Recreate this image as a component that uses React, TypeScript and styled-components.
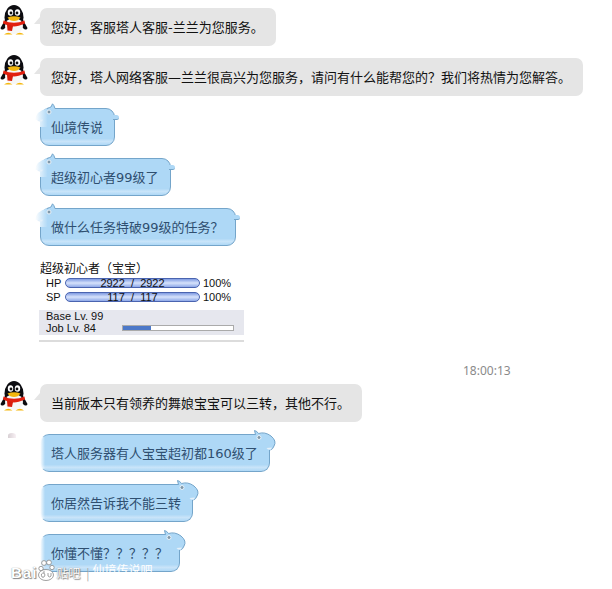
import * as React from 'react';
import { createGlobalStyle, styled } from 'styled-components';

const GlobalStyle = createGlobalStyle`
  html, body {
    margin: 0;
    padding: 0;
    background: #fff;
  }
`;

const agentLines = {
  hello: '您好，客服塔人客服-兰兰为您服务。',
  welcome: '您好，塔人网络客服—兰兰很高兴为您服务，请问有什么能帮您的？我们将热情为您解答。',
  answer: '当前版本只有领养的舞娘宝宝可以三转，其他不行。',
};

//Small QQ penguin used for the service agent
const Penguin = () => (
  <AvatarSvg viewBox="0 0 28 30">
    <ellipse cx="14" cy="12.5" rx="9.5" ry="12.5" fill="#0c0c10" />
    <path d="M5 15 L0.5 23 Q1 25.5 4 24 L8 20 Z" fill="#0c0c10" />
    <path d="M23 15 L27.5 23 Q27 25.5 24 24 L20 20 Z" fill="#0c0c10" />
    <ellipse cx="14" cy="21" rx="9" ry="8" fill="#f6f6f6" />
    <ellipse cx="10.5" cy="7.5" rx="2.7" ry="3.3" fill="#fff" />
    <ellipse cx="17.5" cy="7.5" rx="2.7" ry="3.3" fill="#fff" />
    <circle cx="11" cy="8" r="1.4" fill="#111" />
    <circle cx="17" cy="8" r="1.4" fill="#111" />
    <path d="M7.5 12.5 Q14 10 20.5 12.5 Q18 16 14 16 Q10 16 7.5 12.5 Z" fill="#f5b80e" />
    <path d="M3.5 15.5 Q14 20 24.5 15.5 L25 18.5 Q18 21.5 14 21.5 Q9 21.5 3 18.5 Z" fill="#e2200f" />
    <path d="M7 19.5 L13 21 L12 26 L7.5 25.5 Z" fill="#d81c0c" />
    <path d="M4 29.5 Q8 26 12.5 29.5 Z" fill="#f5b80e" />
    <path d="M15.5 29.5 Q20 26 24 29.5 Z" fill="#f5b80e" />
  </AvatarSvg>
);

//Top left skin of the blue bubble: ear, eye and a white fade
const LeftSkin = () => (
  <LeftSkinSvg viewBox="0 0 24 24">
    <defs>
      <linearGradient id="leftFade" x1="0" x2="1" y1="0" y2="0">
        <stop offset="0" stopColor="#ffffff" />
        <stop offset="0.55" stopColor="#aed8f6" />
      </linearGradient>
    </defs>
    <path d="M1 17 Q2 8 13 5.5 Q15.5 4.5 17 4 L18.5 0.8 Q20 2 21 5.5 L24 5.5 L24 24 L6 24 L6 17 Z" fill="url(#leftFade)" />
    <path d="M13 5.5 Q15.5 4.5 17 4 L18.5 0.8 Q20 2 21 5.5 L24 5.5" fill="none" stroke="#74a5ca" />
    <circle cx="15" cy="9" r="2" fill="#7f97a8" stroke="#e8f2fa" />
    <path d="M3 17 L9 16.5 L8 18.5 L5 18.5 Z" fill="#e4f0fa" />
  </LeftSkinSvg>
);

//Top right skin of the blue bubble: ear, eye and the round bump
const RightSkin = () => (
  <RightSkinSvg viewBox="0 0 26 24">
    <path d="M0 5.5 L4.5 5.5 L3.5 1.5 Q6 2 7.5 4.5 Q14 2.5 20 7 Q26 12 23 17 Q22 20 19.5 21 L0 21 Z" fill="#aed8f6" />
    <path d="M0 5.5 L4.5 5.5 L3.5 1.5 Q6 2 7.5 4.5 Q14 2.5 20 7 Q26 12 23 17 Q22 20 19.5 21" fill="none" stroke="#74a5ca" />
    <circle cx="8" cy="8.5" r="2" fill="#7f97a8" stroke="#e8f2fa" />
    <path d="M15.5 19 L21 18.5 L20 20.5 L17 20.5 Z" fill="#e4f0fa" />
  </RightSkinSvg>
);

const AgentMessage = ({ text }: { text: string }) => (
  <AgentRow>
    <Penguin />
    <GreyBubble>{text}</GreyBubble>
  </AgentRow>
);

const CustomerMessage = ({ text, side }: { text: string; side: 'left' | 'right' }) => (
  <BlueBubble side={side}>
    {side === 'left' ? <LeftSkin /> : <RightSkin />}
    <BubbleText>{text}</BubbleText>
    {side === 'left' && <SideTail />}
  </BlueBubble>
);

const StatusBar = ({ label, value }: { label: string; value: string }) => (
  <StatRow>
    <StatLabel>{label}</StatLabel>
    <Bar>{value}</Bar>
    <span>100%</span>
  </StatRow>
);

const App = () => (
  <Page>
    <GlobalStyle />
    <AgentMessage text={agentLines.hello} />
    <AgentMessage text={agentLines.welcome} />
    <CustomerMessage side="left" text="仙境传说" />
    <CustomerMessage side="left" text="超级初心者99级了" />
    <CustomerMessage side="left" text="做什么任务特破99级的任务？" />
    <StatusCard>
      <StatusTitle>超级初心者（宝宝）</StatusTitle>
      <StatusBar label="HP" value="2922  /  2922" />
      <StatusBar label="SP" value="117  /  117" />
      <LevelPanel>
        <div>Base Lv. 99</div>
        <JobRow>
          <span>Job Lv. 84</span>
          <ExpBar>
            <ExpFill style={{ width: '25%' }} />
          </ExpBar>
        </JobRow>
      </LevelPanel>
    </StatusCard>
    <TimeStamp>18:00:13</TimeStamp>
    <AgentMessage text={agentLines.answer} />
    <Speck />
    <CustomerMessage side="right" text="塔人服务器有人宝宝超初都160级了" />
    <CustomerMessage side="right" text="你居然告诉我不能三转" />
    <CustomerMessage side="right" text="你懂不懂？？？？？" />
    <Watermark>
      <WatermarkLogo>Bai</WatermarkLogo>
      <WatermarkPaw viewBox="0 0 18 22">
        <ellipse cx="9" cy="16" rx="7.5" ry="5.5" />
        <circle cx="4" cy="9.5" r="2.2" />
        <circle cx="7" cy="4" r="2.4" />
        <circle cx="12" cy="3.5" r="2.4" />
        <circle cx="15" cy="8.5" r="2.2" />
        <path d="M5 18 Q3 14 7 14 L7 12 M7 14 Q9 16 7 18 Q6 18.5 5 18 M11 14 L11 17 Q13 19 14 17 L14 14" fill="none" />
      </WatermarkPaw>
      <span>贴吧</span>
      <WatermarkDivider>|</WatermarkDivider>
      <WatermarkBoard>仙境传说吧</WatermarkBoard>
    </Watermark>
  </Page>
);

export default App;

//Styled Components
const Page = styled.div`
  position: relative;
  box-sizing: border-box;
  width: 612px;
  height: 589px;
  padding: 5px 0 0 0;
  overflow: hidden;
  background: #fff;
  font-family: 'DejaVu Sans', 'Noto Sans CJK SC', sans-serif;
  font-size: 13px;
`;

const AvatarSvg = styled.svg`
  width: 28px;
  height: 30px;
  flex: none;
`;

const AgentRow = styled.div`
  display: flex;
  align-items: flex-start;
  gap: 12px;
  margin-bottom: 9px;
`;

const GreyBubble = styled.div`
  position: relative;
  margin-top: 3px;
  padding: 0 12px 0 11px;
  height: 38px;
  line-height: 40px;
  border-radius: 7px;
  background: #e5e5e5;
  color: #111;
  white-space: nowrap;

  &::before {
    content: '';
    position: absolute;
    left: -6px;
    top: 9px;
    border-width: 7px 6px 0 0;
    border-style: solid;
    border-color: transparent #e5e5e5 transparent transparent;
  }
`;

const BlueBubble = styled.div<{ side: 'left' | 'right' }>`
  position: relative;
  box-sizing: border-box;
  width: fit-content;
  height: 38px;
  line-height: 37px;
  margin: 12px 0 0 40px;
  padding: 0 11px 0 10px;
  border: 1px solid #74a5ca;
  border-radius: 9px;
  color: #2f4f70;
  white-space: nowrap;
  background: linear-gradient(#aed8f6 0 82%, #c9e4f9 90%, #aed8f6 100%);
  ${({ side }) =>
    side === 'right' &&
    `
    border-left-color: #d4e9f9;
    &::before {
      content: '';
      position: absolute;
      left: -1px;
      top: 0;
      bottom: -1px;
      width: 5px;
      background: linear-gradient(to right, #fff, rgba(174, 216, 246, 0));
    }
  `}
`;

const BubbleText = styled.span`
  position: relative;
`;

const LeftSkinSvg = styled.svg`
  position: absolute;
  left: -7px;
  top: -6px;
  width: 24px;
  height: 24px;
`;

const RightSkinSvg = styled.svg`
  position: absolute;
  right: -8px;
  top: -6px;
  width: 26px;
  height: 24px;
`;

const SideTail = styled.i`
  position: absolute;
  right: -5px;
  top: 6px;
  width: 6px;
  height: 4px;
  border-radius: 0 3px 3px 0;
  background: #aed8f6;
  border-bottom: 1px solid #74a5ca;
`;

const StatusCard = styled.div`
  box-sizing: border-box;
  width: 205px;
  height: 83px;
  margin: 13px 0 0 39px;
  border-bottom: 2px solid #dcdcdc;
  font-family: 'Liberation Sans', sans-serif;
  font-size: 11px;
  color: #111;
`;

const StatusTitle = styled.div`
  height: 17px;
  line-height: 17px;
  margin-left: 1px;
  font-family: 'Noto Sans CJK SC', sans-serif;
  font-size: 12px;
  white-space: nowrap;
`;

const StatRow = styled.div`
  display: flex;
  align-items: center;
  gap: 3px;
  height: 14px;
  padding-left: 7px;
`;

const StatLabel = styled.span`
  width: 16px;
`;

const Bar = styled.div`
  box-sizing: border-box;
  width: 135px;
  height: 10px;
  line-height: 8px;
  border: 1px solid #4a64b0;
  border-radius: 5px;
  text-align: center;
  font-size: 11px;
  white-space: pre;
  background: linear-gradient(#7f9be2, #d6e2fb 50%, #8ea8e8);
`;

const LevelPanel = styled.div`
  margin-top: 6px;
  height: 25px;
  padding: 0 10px 0 7px;
  background: #e6e7ee;
  line-height: 12px;
`;

const JobRow = styled.div`
  display: flex;
  justify-content: space-between;
  align-items: center;
`;

const ExpBar = styled.div`
  box-sizing: border-box;
  width: 112px;
  height: 6px;
  border: 1px solid #aaa;
  background: #fff;
`;

const ExpFill = styled.div`
  height: 100%;
  background: #4c78c8;
`;

const TimeStamp = styled.div`
  height: 19px;
  margin-top: 20px;
  padding-left: 463px;
  font-family: 'Noto Sans', sans-serif;
  font-size: 12px;
  line-height: 17px;
  color: #8a8a8a;
`;

const Speck = styled.i`
  position: absolute;
  left: 8px;
  top: 433px;
  width: 8px;
  height: 5px;
  border-radius: 50% 50% 0 0;
  background: linear-gradient(to right, #d8d0d4, #f8f0f4);
`;

const Watermark = styled.div`
  position: absolute;
  left: 11px;
  top: 559px;
  display: flex;
  align-items: flex-end;
  font-family: 'Noto Sans CJK SC', sans-serif;
  font-size: 12px;
  line-height: 16px;
  color: #fff;
  text-shadow: 0 0 1px #666, 1px 1px 1px #888;
`;

const WatermarkLogo = styled.span`
  font-family: 'Liberation Sans', sans-serif;
  font-weight: bold;
  font-size: 15px;
  letter-spacing: 1px;
`;

const WatermarkPaw = styled.svg`
  width: 18px;
  height: 22px;
  margin-right: 1px;
  fill: #fff;
  stroke: #888;
  stroke-width: 0.8;
`;

const WatermarkDivider = styled.span`
  margin-left: 6px;
  color: #aaa;
  text-shadow: none;
`;

const WatermarkBoard = styled.span`
  margin: 0 0 3px 3px;
  text-shadow: none;
`;
